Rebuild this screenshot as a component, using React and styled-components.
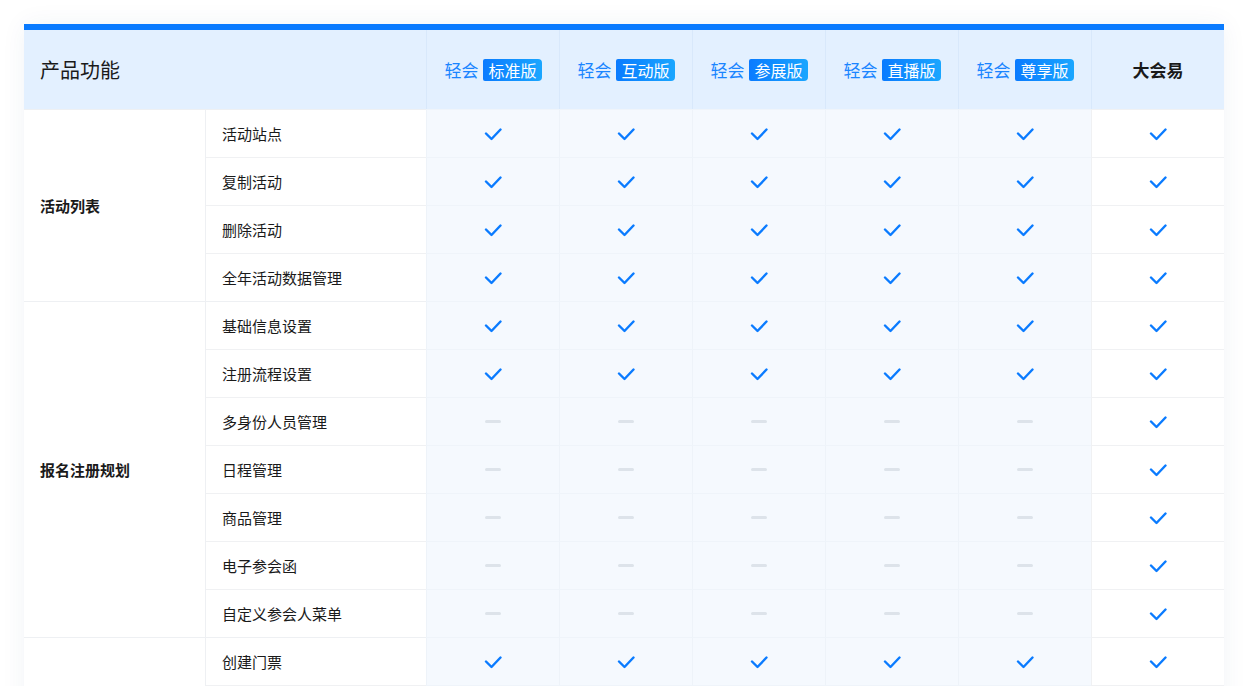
import React from 'react';
import styled, { createGlobalStyle } from 'styled-components';

const GlobalStyle = createGlobalStyle`
  body {
    margin: 0;
    background: #fff;
    font-family: "Noto Sans CJK SC", "Noto Sans", sans-serif;
  }
`;

const Page = styled.div`
  padding: 24px 24px 0;
`;

const Table = styled.div`
  display: grid;
  grid-template-columns: 182px 220px repeat(6, 133px);
  border-top: 6px solid #0a7bff;
  box-shadow: 0 0 24px rgba(20, 60, 120, 0.06);
`;

const HeadCell = styled.div`
  height: 79px;
  background: #e3f0ff;
  display: flex;
  align-items: center;
  justify-content: ${(p) => (p.$left ? 'flex-start' : 'center')};
  padding-left: ${(p) => (p.$left ? '16px' : '0')};
  border-left: ${(p) => (p.$line ? '1px solid #d8e8fb' : 'none')};
  grid-column: ${(p) => p.$span || 'auto'};
  font-size: ${(p) => (p.$left ? '20px' : '17px')};
  font-weight: ${(p) => (p.$bold ? 700 : 400)};
  color: ${(p) => (p.$left || p.$bold ? '#1a1a1a' : '#1a85ff')};
  gap: 5px;
`;

const Badge = styled.span`
  background: linear-gradient(90deg, #0a7bff, #1aa6ff);
  color: #fff;
  font-size: 16px;
  padding: 0 5px;
  line-height: 22px;
  border-radius: 2px 4px 4px 2px;
`;

const GroupCell = styled.div`
  grid-row: span ${(p) => p.$rows};
  display: flex;
  align-items: center;
  padding-left: 16px;
  font-size: 15px;
  font-weight: 700;
  color: #1a1a1a;
  border-top: 1px solid #eef0f3;
  border-right: 1px solid #eef0f3;
`;

const FeatureCell = styled.div`
  height: 47px;
  display: flex;
  align-items: center;
  padding-left: 16px;
  font-size: 15px;
  color: #1a1a1a;
  border-top: 1px solid ${(p) => (p.$first ? '#eef0f3' : '#f0f1f3')};
`;

const MarkCell = styled.div`
  height: 47px;
  display: flex;
  align-items: center;
  justify-content: center;
  background: ${(p) => (p.$white ? '#fff' : '#f5f9fe')};
  border-top: 1px solid ${(p) => (p.$white ? '#f0f1f3' : '#eff4fa')};
  border-left: 1px solid ${(p) => (p.$white ? '#f0f1f3' : '#eef3f9')};
`;

const Dash = styled.span`
  width: 16px;
  height: 3px;
  border-radius: 2px;
  background: #dde3ea;
`;

const Check = () => (
  <svg width="18" height="14" viewBox="0 0 18 14">
    <path d="M2 6.5 L7.5 12 L16.5 2.5" fill="none" stroke="#0a7bff" strokeWidth="2.4" strokeLinecap="round" strokeLinejoin="round" />
  </svg>
);

const products = ['标准版', '互动版', '参展版', '直播版', '尊享版'];

const groups = [
  {
    name: '活动列表',
    rows: [['活动站点', 1], ['复制活动', 1], ['删除活动', 1], ['全年活动数据管理', 1]],
  },
  {
    name: '报名注册规划',
    rows: [
      ['基础信息设置', 1],
      ['注册流程设置', 1],
      ['多身份人员管理', 0],
      ['日程管理', 0],
      ['商品管理', 0],
      ['电子参会函', 0],
      ['自定义参会人菜单', 0],
    ],
  },
  {
    name: '票务管理',
    rows: [['创建门票', 1], ['门票核销', 1], ['门票统计', 1]],
  },
];

export default function App() {
  return (
    <Page>
      <GlobalStyle />
      <Table>
        <HeadCell $left $span="span 2">产品功能</HeadCell>
        {products.map((p) => (
          <HeadCell key={p} $line>
            轻会<Badge>{p}</Badge>
          </HeadCell>
        ))}
        <HeadCell $line $bold>大会易</HeadCell>
        {groups.map((g) => (
          <React.Fragment key={g.name}>
            <GroupCell $rows={g.rows.length}>{g.name}</GroupCell>
            {g.rows.map(([label, all], i) => (
              <React.Fragment key={label}>
                <FeatureCell $first={i === 0}>{label}</FeatureCell>
                {products.map((p) => (
                  <MarkCell key={p}>{all ? <Check /> : <Dash />}</MarkCell>
                ))}
                <MarkCell $white><Check /></MarkCell>
              </React.Fragment>
            ))}
          </React.Fragment>
        ))}
      </Table>
    </Page>
  );
}
